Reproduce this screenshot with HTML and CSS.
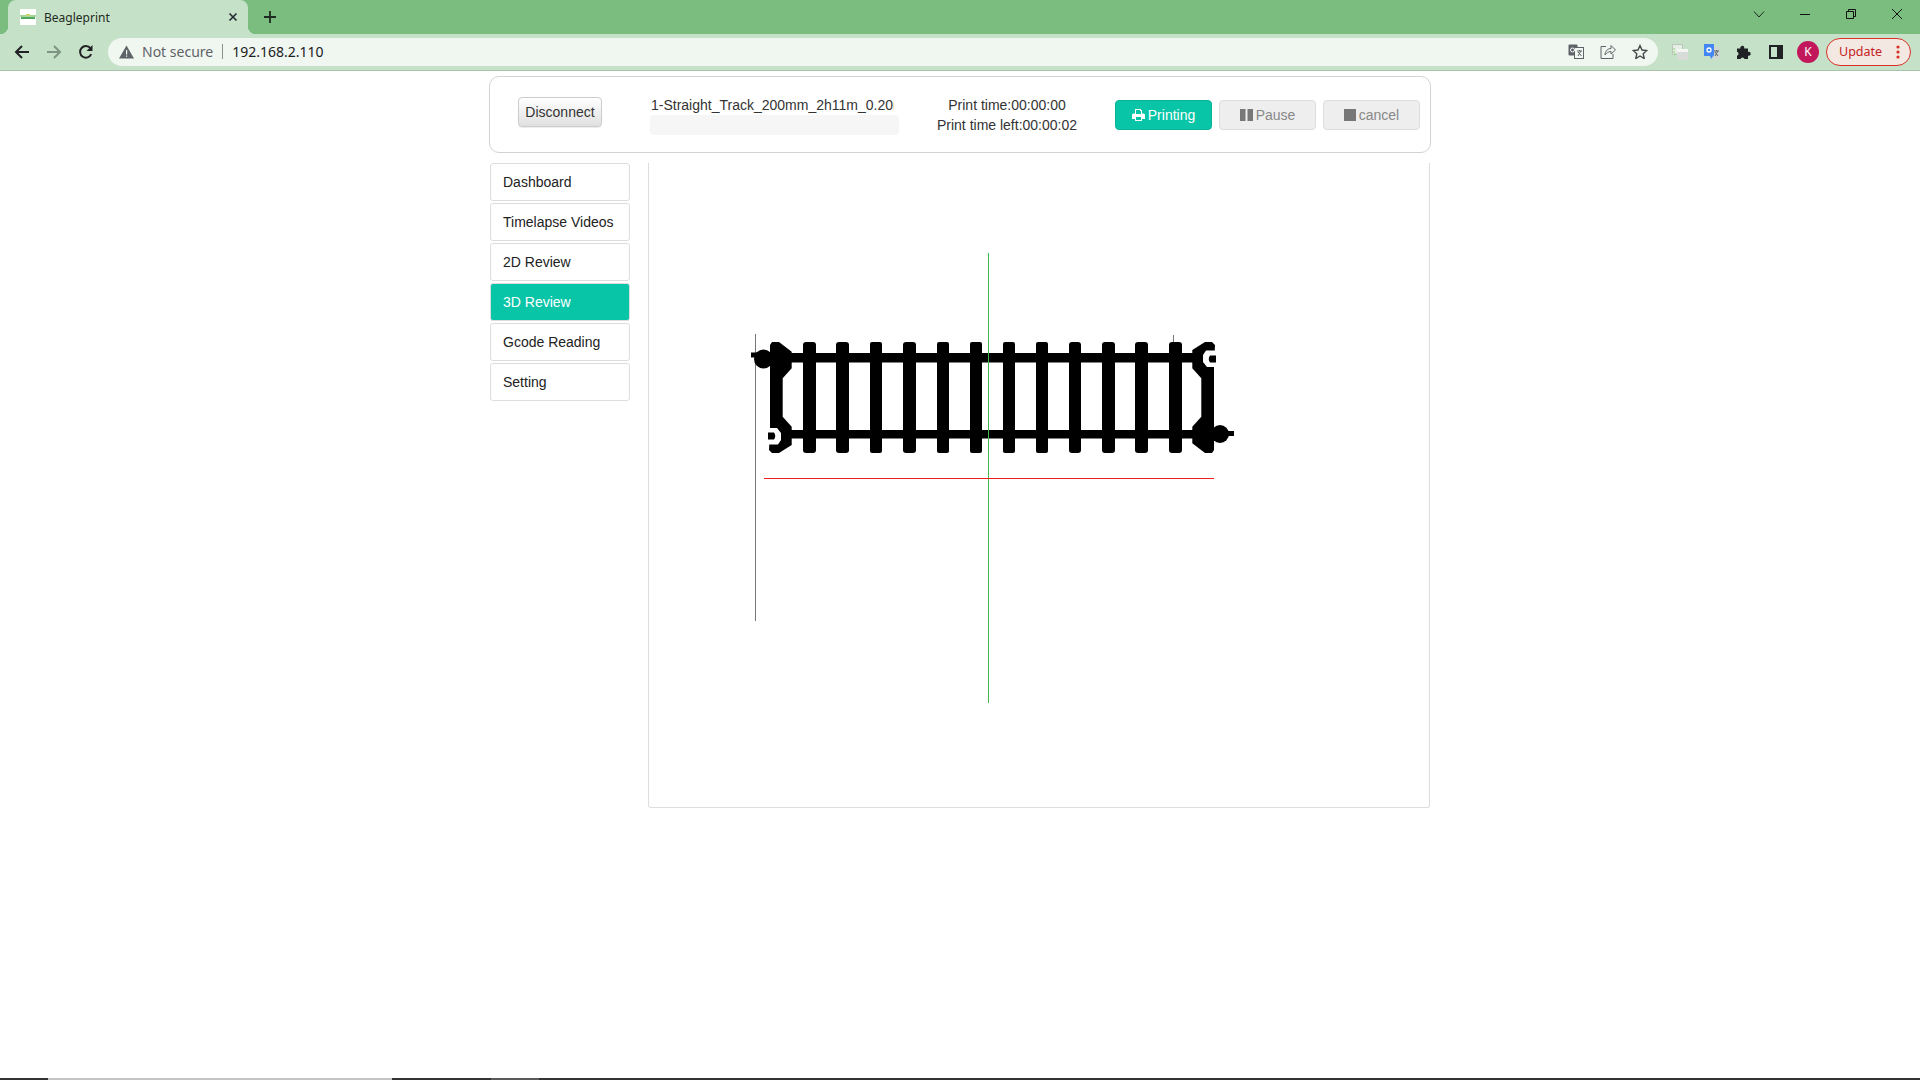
FILE: index.html
```html
<!DOCTYPE html>
<html lang="en">
<head>
<meta charset="utf-8">
<title>Beagleprint</title>
<link rel="stylesheet" href="styles.css">
</head>
<body>
<header class="browser">
  <div class="tabstrip">
    <div class="tab">
      <svg class="favicon" width="16" height="16" viewBox="0 0 16 16"><rect width="16" height="16" fill="#fff"/><rect x="0" y="6" width="16" height="2" fill="#a9d69a"/><rect x="1" y="8" width="14" height="2" fill="#4fa85e"/><rect x="6" y="5" width="4" height="2" fill="#c9d46a"/></svg>
      <span class="tab-title">Beagleprint</span>
      <svg class="tab-close" width="10" height="10" viewBox="0 0 10 10"><path d="M1.500 1.500l7 7M8.500 1.500l-7 7" stroke="#2b2f33" stroke-width="1.700" fill="none"/></svg>
    </div>
    <svg class="new-tab" width="14" height="14" viewBox="0 0 14 14"><path d="M7 1v12M1 7h12" stroke="#1f2a22" stroke-width="1.800" fill="none"/></svg>
    <div class="window-controls">
      <svg class="wc-chevron" width="12" height="8" viewBox="0 0 12 8"><path d="M1 1.500l5 5.500 5-5.500" stroke="#1c2b20" fill="none"/></svg>
      <svg class="wc" width="12" height="12" viewBox="0 0 12 12"><path d="M1 6.500h10" stroke="#111" fill="none"/></svg>
      <svg class="wc" width="12" height="12" viewBox="0 0 12 12"><path d="M1.500 3.500h7v7h-7zM3.500 3.500v-2h7v7h-2" stroke="#111" fill="none"/></svg>
      <svg class="wc" width="12" height="12" viewBox="0 0 12 12"><path d="M1 1l10 10M11 1L1 11" stroke="#111" fill="none"/></svg>
    </div>
  </div>
  <div class="toolbar">
    <span class="tb-btn"><svg width="16" height="16" viewBox="0 0 16 16"><path d="M15 8H2.500M8 2L2 8l6 6" stroke="#202124" stroke-width="2" fill="none"/></svg></span>
    <span class="tb-btn"><svg width="16" height="16" viewBox="0 0 16 16"><path d="M1 8h12.500M8 2l6 6-6 6" stroke="#7f9583" stroke-width="2" fill="none"/></svg></span>
    <span class="tb-btn"><svg width="16" height="16" viewBox="0 0 16 16"><path d="M13.200 10.200A5.800 5.800 0 1 1 12.400 4.200" stroke="#202124" stroke-width="2" fill="none"/><path d="M14.500 1v6h-6z" fill="#202124"/></svg></span>
    <div class="omnibox">
      <svg class="warn" width="15" height="14" viewBox="0 0 15 14"><path d="M7.500 0.500L15 13.500H0z" fill="#5f6368"/><path d="M7 5h1.200v4.400H7zM7 10.400h1.200v1.300H7z" fill="#f0f6f0"/></svg>
      <span class="not-secure">Not secure</span>
      <span class="omni-sep"></span>
      <span class="url">192.168.2.110</span>
      <span class="omni-icons">
        <span class="tb-btn"><svg width="16" height="15" viewBox="0 0 16 15"><rect x="0.500" y="0.500" width="9" height="11" rx="1" fill="#5f6368"/><rect x="6.500" y="3.500" width="9" height="11" fill="#f0f6f0" stroke="#5f6368"/><circle cx="4.500" cy="6" r="2" fill="none" stroke="#fff"/><path d="M9 7h5M11.500 6v1M13 7l-3 5M10 8l3.500 4" stroke="#5f6368" fill="none"/></svg></span>
        <span class="tb-btn"><svg width="16" height="15" viewBox="0 0 16 15"><path d="M6 2.500H1v12h12V10" stroke="#5f6368" fill="none"/><path d="M5 11c0-4 3-6.500 6-6.500V1.500l4.500 4.500L11 10V7.500C8.500 7.500 6.500 9 5 11z" stroke="#5f6368" fill="none"/></svg></span>
        <span class="tb-btn"><svg width="16" height="15" viewBox="0 0 16 15"><path d="M8 1.500l2 4.500 4.800.5-3.600 3.200 1 4.800L8 12l-4.200 2.500 1-4.800L1.200 6.500 6 6z" stroke="#45494d" stroke-width="1.400" fill="none"/></svg></span>
      </span>
    </div>
    <div class="ext-icons">
      <span class="tb-btn"><svg width="16" height="16" viewBox="0 0 16 16"><rect x="0.500" y="0.500" width="10" height="10" fill="#e4eee4" stroke="#bcc6bc"/><path d="M2 4v6h6" stroke="#8fd46a" fill="none" stroke-dasharray="2 1"/><rect x="5" y="5" width="11" height="11" fill="#d8dcd8"/><rect x="5" y="5" width="11" height="3" fill="#f4f6f4"/></svg></span>
      <span class="tb-btn"><svg width="16" height="16" viewBox="0 0 16 16"><rect x="8" y="3" width="8" height="12" fill="#cfd8d0"/><path d="M10 7h5M12.500 6v1M14 7l-3 5M11 8l3 4" stroke="#5f6368" fill="none"/><path d="M0 0h10v11l-3 4-1-3H0z" fill="#4285f4"/><circle cx="5" cy="6" r="2" fill="none" stroke="#fff" stroke-width="1.300"/></svg></span>
      <span class="tb-btn"><svg width="16" height="16" viewBox="0 0 16 16"><path d="M1 4.500h3.300a2 2 0 0 1 3.900-1.200l.1 1.200h3.700v3.300a2 2 0 0 1 1.300 3.900l-1.300.1v3.200H8.500a2 2 0 0 0-3.900 0H1v-3.300a2 2 0 0 0 0-3.900z" fill="#202124"/></svg></span>
      <span class="tb-btn"><svg width="14" height="14" viewBox="0 0 14 14"><path d="M0 0h14v14H0z" fill="#202124"/><path d="M2 2h6v10H2z" fill="#c5e2c8"/></svg></span>
      <span class="tb-btn"><span class="avatar">K</span></span>
    </div>
    <div class="update"><span>Update</span><svg width="4" height="14" viewBox="0 0 4 14"><circle cx="2" cy="2" r="1.600" fill="#d93025"/><circle cx="2" cy="7" r="1.600" fill="#d93025"/><circle cx="2" cy="12" r="1.600" fill="#d93025"/></svg></div>
  </div>
</header>

<main class="page">
  <section class="status-card">
    <button class="btn btn-connect">Disconnect</button>
    <div class="job">
      <div class="job-name">1-Straight_Track_200mm_2h11m_0.20m</div>
      <div class="progress"></div>
    </div>
    <div class="times">
      <div>Print time:00:00:00</div>
      <div>Print time left:00:00:02</div>
    </div>
    <div class="actions">
      <button class="btn btn-action btn-primary"><svg width="13" height="12" viewBox="0 0 13 12"><path fill-rule="evenodd" d="M3 0h5.500L10 1.500V4.500h1.500A1.500 1.500 0 0 1 13 6v4h-3v2H3v-2H0V6a1.500 1.500 0 0 1 1.500-1.500H3zM4 1v4h5V2H8V1zM4 8v3h5V8z" fill="#fff"/></svg>Printing</button>
      <button class="btn btn-action btn-off"><svg width="13" height="12" viewBox="0 0 13 12"><path d="M0 0h5.500v12H0zM7.500 0H13v12H7.500z" fill="#777"/></svg>Pause</button>
      <button class="btn btn-action btn-off"><svg width="12" height="12" viewBox="0 0 12 12"><rect width="12" height="12" fill="#777"/></svg>cancel</button>
    </div>
  </section>

  <div class="workspace">
    <nav class="sidebar">
      <a class="nav-item">Dashboard</a>
      <a class="nav-item">Timelapse Videos</a>
      <a class="nav-item">2D Review</a>
      <a class="nav-item nav-active">3D Review</a>
      <a class="nav-item">Gcode Reading</a>
      <a class="nav-item">Setting</a>
    </nav>
    <div class="viewer">
      <svg class="scene" width="780" height="644" viewBox="649 163 780 644">
        <defs>
          <g id="joiner">
            <path d="M770 345l2-3h7l12.700 9.700v16.600l-9 10v38.400l9 10V445l-12.700 8h-7L769 450l1-22z" fill="#000"/>
            <path d="M768 428h9l4 5v7l-3 4.500h-10z" fill="#fff"/>
            <path d="M768 432.500h6q2.500 3.500 0 7h-6z" fill="#000"/>
          </g>
        </defs>
        <path d="M755.500 334V621" stroke="#777" fill="none"/>
        <path d="M1173.500 335V346" stroke="#777" fill="none"/>
        <g fill="#000">
          <rect x="788" y="353" width="408" height="9.500"/>
          <rect x="788" y="430" width="408" height="8.500"/>
          <rect x="803" y="342" width="13" height="111" rx="3"/>
          <rect x="836" y="342" width="13" height="111" rx="3"/>
          <rect x="870" y="342" width="12" height="111" rx="2"/>
          <rect x="903" y="342" width="13" height="111" rx="3"/>
          <rect x="937" y="342" width="12" height="111" rx="2"/>
          <rect x="970" y="342" width="12" height="111" rx="2"/>
          <rect x="1003" y="342" width="12" height="111" rx="2"/>
          <rect x="1036" y="342" width="12" height="111" rx="2"/>
          <rect x="1069" y="342" width="12" height="111" rx="3"/>
          <rect x="1102" y="342" width="13" height="111" rx="3"/>
          <rect x="1135" y="342" width="13" height="111" rx="3"/>
          <rect x="1169" y="342" width="13" height="111" rx="3"/>
          <circle cx="763.500" cy="359" r="9.500"/>
          <rect x="751" y="352.500" width="14" height="5"/>
          <circle cx="1220" cy="434" r="9"/>
          <rect x="1222" y="431" width="12" height="5"/>
        </g>
        <use href="#joiner"/>
        <use href="#joiner" transform="rotate(180 992 397.500)"/>
        <rect x="1203" y="425" width="11" height="20" fill="#000"/>
        <path d="M988.500 253V703" stroke="#41b84a" fill="none"/>
        <path d="M764 478.500H1214" stroke="#f21c1c" fill="none"/>
      </svg>
    </div>
  </div>
</main>

<footer class="taskbar">
  <span class="tb-seg tb-dark tb-a"></span>
  <span class="tb-seg tb-light tb-b"></span>
  <span class="tb-seg tb-dark tb-c"></span>
  <span class="tb-seg tb-mid tb-d"></span>
  <span class="tb-seg tb-dark tb-e"></span>
</footer>
</body>
</html>
```
FILE: styles.css
```css
* { box-sizing: border-box; }
html, body { margin: 0; height: 100%; }
body {
  display: flex;
  flex-direction: column;
  overflow: hidden;
  background: #fff;
  color: #333;
  font-family: "Liberation Sans", Arial, sans-serif;
  font-size: 14px;
}

/* Browser chrome */
.browser { flex: none; font-family: "Noto Sans", "Open Sans", sans-serif; }
.tabstrip {
  height: 34px;
  background: #7abd7e;
  display: flex;
  align-items: flex-start;
  padding-left: 8px;
}
.tab {
  position: relative;
  width: 240px;
  height: 34px;
  background: #c5e2c8;
  border-radius: 8px 8px 0 0;
  display: flex;
  align-items: center;
  padding: 0 10px 0 12px;
}
.tab::before, .tab::after {
  content: "";
  position: absolute;
  bottom: 0;
  width: 8px;
  height: 8px;
}
.tab::before { left: -8px; background: radial-gradient(circle at 0 0, transparent 8px, #c5e2c8 8.500px); }
.tab::after { right: -8px; background: radial-gradient(circle at 100% 0, transparent 8px, #c5e2c8 8.500px); }
.favicon { flex: none; }
.tab-title { margin-left: 8px; font-size: 12px; color: #1f2a22; flex: 1; }
.tab-close { flex: none; }
.new-tab { margin: 10px 0 0 15px; }
.window-controls {
  margin-left: auto;
  margin-right: 17px;
  display: flex;
  align-items: center;
  height: 28px;
  gap: 34px;
}
.toolbar {
  height: 37px;
  background: #c5e2c8;
  border-bottom: 1px solid #a9c4ab;
  display: flex;
  align-items: center;
  padding: 0 0 1px 6px;
}
.tb-btn {
  width: 32px;
  height: 28px;
  display: flex;
  align-items: center;
  justify-content: center;
  flex: none;
}
.omnibox {
  width: 1550px;
  height: 28px;
  margin-left: 6px;
  background: #f0f6f0;
  border-radius: 14px;
  display: flex;
  align-items: center;
  padding: 0 2px 0 11px;
}
.warn { flex: none; }
.not-secure { margin-left: 8px; font-size: 14px; color: #5f6368; }
.omni-sep { width: 1px; height: 15px; background: #8a908c; margin: 0 9px 0 9px; }
.url { font-size: 14px; color: #202124; }
.omni-icons { margin-left: auto; display: flex; }
.ext-icons { display: flex; margin-left: 6px; }
.avatar {
  width: 22px;
  height: 22px;
  border-radius: 50%;
  background: #c2185b;
  color: #fff;
  font-size: 12px;
  display: flex;
  align-items: center;
  justify-content: center;
}
.update {
  width: 85px;
  height: 28px;
  margin-left: 2px;
  border: 1px solid #d93025;
  border-radius: 14px;
  background: #f3e8e2;
  color: #c5221f;
  font-size: 12.500px;
  display: flex;
  align-items: center;
  padding: 0 10px 0 12px;
  justify-content: space-between;
}

/* Page */
.page {
  flex: 1;
  width: 942px;
  margin: 0 auto;
  padding-top: 5px;
}
.status-card {
  height: 77px;
  border: 1px solid #d2d2d2;
  border-radius: 10px;
  display: flex;
  align-items: flex-start;
  padding: 18px 10px 0 28px;
}
.btn {
  font-family: inherit;
  font-size: 14px;
  line-height: 20px;
  border-radius: 4px;
  cursor: pointer;
  display: flex;
  align-items: center;
  justify-content: center;
  padding: 0;
}
.btn-connect {
  width: 84px;
  height: 30px;
  margin-top: 2px;
  color: #333;
  border: 1px solid #ccc;
  background: linear-gradient(#fff, #e0e0e0);
  box-shadow: 0 1px 1px rgba(0, 0, 0, .075);
}
.job { width: 249px; margin-left: 48px; }
.job-name {
  width: 244px;
  height: 20px;
  line-height: 20px;
  padding-left: 1px;
  overflow: hidden;
  white-space: nowrap;
  color: #333;
}
.progress {
  height: 20px;
  background: #f6f6f6;
  border-radius: 4px;
}
.times { flex: 1; text-align: center; line-height: 20px; color: #333; }
.actions { display: flex; gap: 7px; margin-top: 5px; }
.btn-action { width: 97px; height: 30px; gap: 3px; border: 1px solid; }
.btn-primary { background: #09c5a8; border-color: #08b398; color: #fff; }
.btn-off { background: #eee; border-color: #ddd; color: #888; }

.workspace { display: flex; margin-top: 10px; padding-left: 1px; }
.sidebar { width: 140px; display: flex; flex-direction: column; gap: 2px; }
.nav-item {
  height: 38px;
  line-height: 36px;
  padding-left: 12px;
  border: 1px solid #ddd;
  border-radius: 3px;
  color: #222;
  background: #fff;
}
.nav-active { background: #09c5a8; color: #fff; }
.viewer {
  width: 782px;
  height: 645px;
  margin-left: 18px;
  border: 1px solid #ddd;
  border-top: 0;
  border-radius: 0 0 3px 3px;
}
.scene { display: block; }

/* Bottom strip */
.taskbar { flex: none; height: 2px; display: flex; }
.tb-seg { display: block; height: 100%; }
.tb-dark { background: #333; }
.tb-light { background: #c4c4c4; }
.tb-mid { background: #5a5a5a; }
.tb-a { width: 48px; }
.tb-b { width: 344px; }
.tb-c { width: 99px; }
.tb-d { width: 48px; }
.tb-e { flex: 1; }
```
